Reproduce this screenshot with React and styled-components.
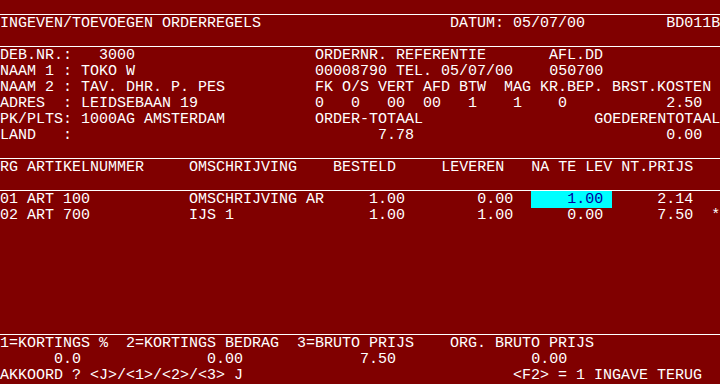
import React from "react";
import styled, { createGlobalStyle } from "styled-components";

const GlobalStyle = createGlobalStyle`
  html, body {
    margin: 0;
    padding: 0;
    background: #800000;
  }
`;

const Screen = styled.div`
  width: 720px;
  height: 384px;
  background: #800000;
  color: #ffffff;
  font-family: "Liberation Mono", "DejaVu Sans Mono", monospace;
  font-size: 15px;
  overflow: hidden;
`;

const Line = styled.div`
  height: 16px;
  line-height: 16px;
  white-space: pre;
`;

const Rule = styled.div`
  height: 16px;
  box-sizing: border-box;
  padding-top: 14px;
  &::after {
    content: "";
    display: block;
    height: 1px;
    background: #ffffff;
  }
`;

const Field = styled.span`
  background: #00ffff;
  color: #0000a0;
`;

const COLS = 80;

// each row: "rule", or a list of [col, text, isField]
const rows = [
  "rule",
  [[0, "INGEVEN/TOEVOEGEN ORDERREGELS"], [50, "DATUM: 05/07/00"], [74, "BD011B"]],
  "rule",
  [[0, "DEB.NR.:   3000"], [35, "ORDERNR. REFERENTIE"], [61, "AFL.DD"]],
  [[0, "NAAM 1 : TOKO W"], [35, "00008790 TEL. 05/07/00"], [61, "050700"]],
  [[0, "NAAM 2 : TAV. DHR. P. PES"], [35, "FK O/S VERT AFD BTW  MAG KR.BEP. BRST.KOSTEN"]],
  [[0, "ADRES  : LEIDSEBAAN 19"], [35, "0   0   00  00   1    1    0"], [74, "2.50"]],
  [[0, "PK/PLTS: 1000AG AMSTERDAM"], [35, "ORDER-TOTAAL"], [66, "GOEDERENTOTAAL"]],
  [[0, "LAND   :"], [42, "7.78"], [74, "0.00"]],
  "rule",
  [[0, "RG ARTIKELNUMMER"], [21, "OMSCHRIJVING"], [37, "BESTELD"], [49, "LEVEREN"], [59, "NA TE LEV"], [69, "NT.PRIJS"]],
  "rule",
  [[0, "01 ART 100"], [21, "OMSCHRIJVING AR"], [41, "1.00"], [53, "0.00"], [59, "    1.00 ", true], [73, "2.14"]],
  [[0, "02 ART 700"], [21, "IJS 1"], [41, "1.00"], [53, "1.00"], [63, "0.00"], [73, "7.50"], [79, "*"]],
  [],
  [],
  [],
  [],
  [],
  [],
  "rule",
  [[0, "1=KORTINGS %  2=KORTINGS BEDRAG  3=BRUTO PRIJS    ORG. BRUTO PRIJS"]],
  [[6, "0.0"], [23, "0.00"], [40, "7.50"], [59, "0.00"]],
  [[0, "AKKOORD ? <J>/<1>/<2>/<3> J"], [57, "<F2> = 1 INGAVE TERUG"]],
];

const renderRow = (segments) => {
  const parts = [];
  let pos = 0;
  segments.forEach(([col, text, field], i) => {
    if (col > pos) parts.push(" ".repeat(col - pos));
    parts.push(field ? <Field key={i}>{text}</Field> : text);
    pos = col + text.length;
  });
  if (pos < COLS) parts.push(" ".repeat(COLS - pos));
  return parts;
};

const App = () => {
  return (
    <Screen>
      <GlobalStyle />
      {rows.map((r, i) =>
        r === "rule" ? <Rule key={i} /> : <Line key={i}>{renderRow(r)}</Line>
      )}
    </Screen>
  );
};

export default App;
